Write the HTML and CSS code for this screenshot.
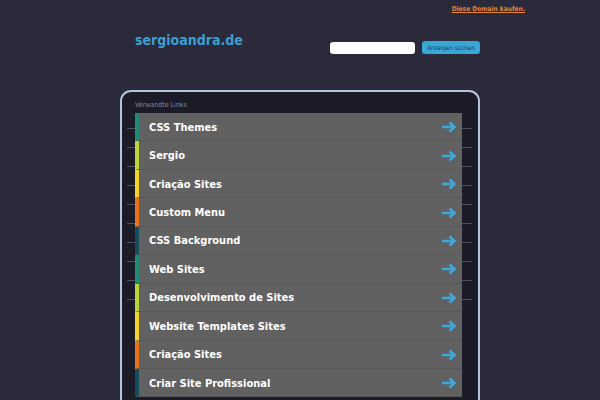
FILE: index.html
```html
<!DOCTYPE html>
<html lang="de">
<head>
<meta charset="utf-8">
<title>sergioandra.de</title>
<link rel="stylesheet" href="styles.css">
</head>
<body>
<div class="topbar"><a class="buy" href="#">Diese Domain kaufen.</a></div>
<div class="wrap">
  <div class="header">
    <div class="logo">sergioandra.de</div>
    <form class="search">
      <input class="search-input" type="text">
      <button class="search-btn" type="button">Anzeigen suchen</button>
    </form>
  </div>
  <div class="panel">
    <div class="label">Verwandte Links</div>
    <ul class="links">
      <li class="row c1"><span class="txt">CSS Themes</span><svg class="arrow" viewBox="0 0 16 12"><path d="M1 6H13.5M8.5 1.5L13.5 6L8.5 10.5"/></svg></li>
      <li class="row c2"><span class="txt">Sergio</span><svg class="arrow" viewBox="0 0 16 12"><path d="M1 6H13.5M8.5 1.5L13.5 6L8.5 10.5"/></svg></li>
      <li class="row c3"><span class="txt">Criação Sites</span><svg class="arrow" viewBox="0 0 16 12"><path d="M1 6H13.5M8.5 1.5L13.5 6L8.5 10.5"/></svg></li>
      <li class="row c4"><span class="txt">Custom Menu</span><svg class="arrow" viewBox="0 0 16 12"><path d="M1 6H13.5M8.5 1.5L13.5 6L8.5 10.5"/></svg></li>
      <li class="row c5"><span class="txt">CSS Background</span><svg class="arrow" viewBox="0 0 16 12"><path d="M1 6H13.5M8.5 1.5L13.5 6L8.5 10.5"/></svg></li>
      <li class="row c1"><span class="txt">Web Sites</span><svg class="arrow" viewBox="0 0 16 12"><path d="M1 6H13.5M8.5 1.5L13.5 6L8.5 10.5"/></svg></li>
      <li class="row c2"><span class="txt">Desenvolvimento de Sites</span><svg class="arrow" viewBox="0 0 16 12"><path d="M1 6H13.5M8.5 1.5L13.5 6L8.5 10.5"/></svg></li>
      <li class="row c3"><span class="txt">Website Templates Sites</span><svg class="arrow" viewBox="0 0 16 12"><path d="M1 6H13.5M8.5 1.5L13.5 6L8.5 10.5"/></svg></li>
      <li class="row c4"><span class="txt">Criação Sites</span><svg class="arrow" viewBox="0 0 16 12"><path d="M1 6H13.5M8.5 1.5L13.5 6L8.5 10.5"/></svg></li>
      <li class="row c5"><span class="txt">Criar Site Profissional</span><svg class="arrow" viewBox="0 0 16 12"><path d="M1 6H13.5M8.5 1.5L13.5 6L8.5 10.5"/></svg></li>
    </ul>
  </div>
</div>
</body>
</html>
```

FILE: styles.css
```css
* { box-sizing: border-box; }
html, body { margin: 0; padding: 0; }
body {
  background: #2a2a3a;
  font-family: "DejaVu Sans Condensed", "DejaVu Sans", sans-serif;
  font-stretch: condensed;
  width: 600px;
  height: 400px;
  overflow: hidden;
}
.topbar {
  display: flex;
  justify-content: flex-end;
  padding: 5px 75px 0 0;
  height: 15px;
}
.buy {
  color: #e8843c;
  font-size: 6.6px;
  font-weight: bold;
  text-decoration: underline;
}
.wrap {
  width: 360px;
  margin: 0 auto;
}
.header {
  display: flex;
  justify-content: space-between;
  align-items: flex-start;
  height: 75px;
}
.logo {
  color: #3c9fd2;
  font-size: 14px;
  font-weight: bold;
  padding: 16px 0 0 15px;
  line-height: 18px;
}
.search {
  display: flex;
  gap: 7px;
  margin: 26px 0 0 0;
}
.search-input {
  width: 85px;
  height: 12px;
  border: 0;
  border-radius: 3px;
  background: #fff;
  padding: 0;
  margin-top: 1px;
}
.search-btn {
  width: 58px;
  height: 13px;
  border: 0;
  border-radius: 3px;
  background: #39a7d6;
  color: #1d3a55;
  font-family: "DejaVu Sans Condensed", "DejaVu Sans", sans-serif;
  font-stretch: condensed;
  font-size: 6.2px;
  padding: 0;
  line-height: 13px;
}
.panel {
  border: 2px solid #b3c5d6;
  border-bottom: 0;
  border-radius: 11px 11px 0 0;
  background: #1c1c28;
  padding: 0 16px 0 13px;
  height: 320px;
}
.label {
  color: #85858f;
  font-size: 7px;
  height: 21px;
  padding: 8px 0 0 0;
  line-height: 10px;
}
.links {
  list-style: none;
  margin: 0 -10px 0 -8px;
  padding: 0 10px 0 8px;
  background-image: repeating-linear-gradient(to bottom, transparent 0, transparent 15px, #50505c 15px, #50505c 16px, transparent 16px, transparent 19px);
  background-size: 100% 192px;
  background-repeat: no-repeat;
}
.row {
  display: flex;
  align-items: center;
  justify-content: space-between;
  height: 28.45px;
  background: #616161;
  border-left: 4px solid #1f8b73;
  border-bottom: 1px solid #575757;
  padding: 1px 5px 0 10px;
}
.c1 { border-left-color: #1f8b73; }
.c2 { border-left-color: #b8d53a; }
.c3 { border-left-color: #f4d22a; }
.c4 { border-left-color: #ea7219; }
.c5 { border-left-color: #144c5f; }
.txt {
  color: #ffffff;
  font-size: 11px;
  font-weight: bold;
}
.arrow {
  width: 16px;
  height: 12px;
  fill: none;
  stroke: #3fa8da;
  stroke-width: 2.6;
}
```
